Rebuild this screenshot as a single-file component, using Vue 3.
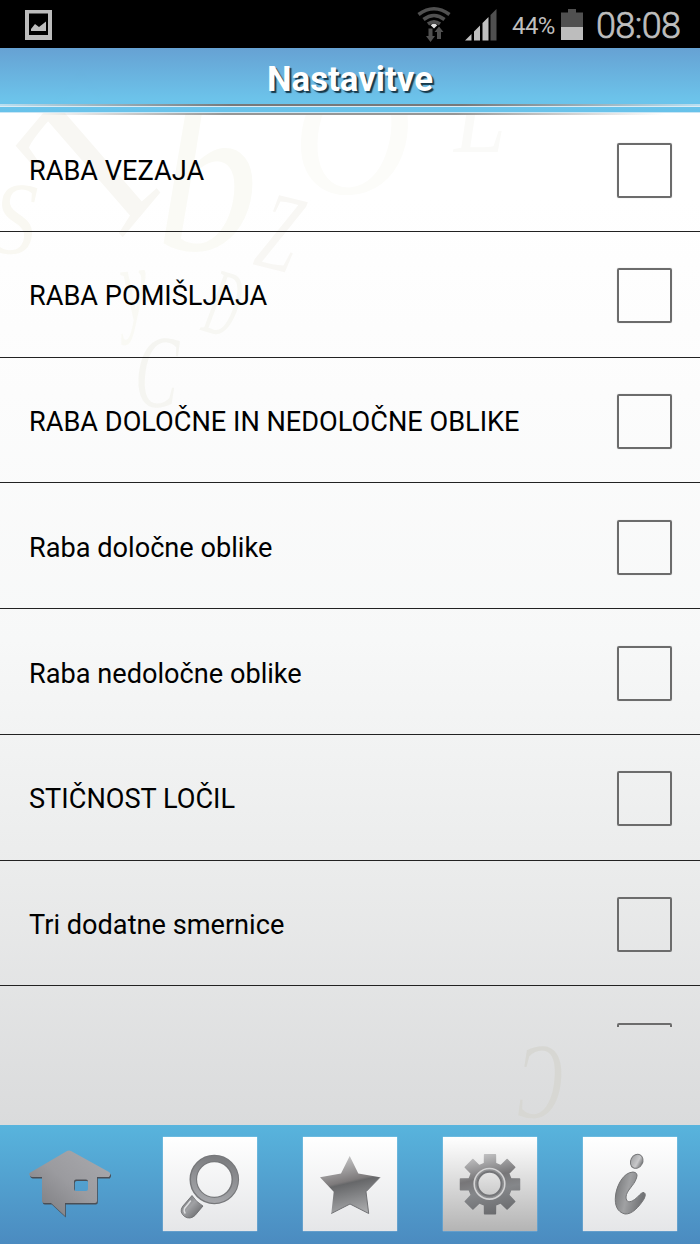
<template>
  <div class="screen">
    <!-- Status bar -->
    <div class="status">
      <svg class="picture-icon" width="27" height="30" viewBox="0 0 27 30">
        <path d="M0 0H27V30H0ZM4 3.5V25H23V3.5Z" fill="#bdbdbd" fill-rule="evenodd" />
        <path d="M6 21V19L10 14L14 17L21 11.5V21Z" fill="#bdbdbd" />
      </svg>
      <div class="status-right">
        <svg class="wifi-icon" width="34" height="36" viewBox="0 0 34 36" fill="none">
          <g stroke="#505050" stroke-width="3.600">
            <path d="M1.500 8.500Q17 -3 32.500 8.500" />
            <path d="M6.500 13.500Q17 5.500 27.500 13.500" />
            <path d="M11 18Q17 13.500 23 18" />
          </g>
          <path d="M17 22.500L13.700 19.200Q17 16.500 20.300 19.200Z" fill="#e0e0e0" />
          <path d="M11.500 22.500H15.500V30H18L13.500 36L9 30H11.500Z" fill="#505050" />
          <path d="M20 33V26H17.500L22 20.500L26.500 26H24V33Z" fill="#505050" />
        </svg>
        <svg class="signal-icon" width="32" height="32" viewBox="0 0 32 32">
          <path d="M0 31.500L6.500 25V31.500Z M9 31.500V22.500L15 16.500V31.500Z M17.500 31.500V14L23.500 8V31.500Z" fill="#c0c0c0" />
          <path d="M25.500 31.500V6L31.500 0V31.500Z" fill="#505050" />
        </svg>
        <span class="percent">44%</span>
        <svg class="battery-icon" width="22" height="32" viewBox="0 0 22 32">
          <path d="M0 3.500H7V0H15V3.500H22V18H0Z" fill="#505050" />
          <path d="M0 18H22V31H0Z" fill="#bdbdbd" />
        </svg>
        <span class="clock">08:08</span>
      </div>
    </div>

    <main class="page">
      <!-- Faint letters behind the list -->
      <svg class="letters" width="700" height="1077" viewBox="0 48 700 1077" aria-hidden="true">
        <text
          v-for="(l, i) in letters"
          :key="i"
          :transform="`translate(${l.x} ${l.y}) rotate(${l.rotate}) scale(${l.stretch} 1)`"
          :font-size="l.size"
          :fill="l.color"
        >{{ l.char }}</text>
      </svg>

      <header class="header">
        <h1>Nastavitve</h1>
        <div class="rule"></div>
      </header>

      <ul class="list">
        <li v-for="(item, i) in items" :key="i" class="row">
          <span class="label">{{ item.label }}</span>
          <button
            class="checkbox"
            role="checkbox"
            :aria-checked="item.checked"
            @click="item.checked = !item.checked"
          >
            <svg v-if="item.checked" viewBox="0 0 54 54"><path d="M10 28L22 40L44 13" /></svg>
          </button>
        </li>
      </ul>
    </main>

    <!-- Bottom navigation -->
    <nav class="nav">
      <button
        v-for="tab in tabs"
        :key="tab"
        :class="['tab', tab, { active: tab === current }]"
        :aria-label="tab"
        @click="current = tab"
      >
        <svg v-if="tab === 'home'" width="94" height="94" viewBox="0 0 94 94">
          <defs>
            <linearGradient id="home-fill" x1="1" y1="0" x2="0" y2="1">
              <stop offset="0" stop-color="#aaaaae" />
              <stop offset=".5" stop-color="#9b9b9f" />
              <stop offset="1" stop-color="#77777b" />
            </linearGradient>
          </defs>
          <path :d="homePath" fill="#4a4e55" fill-rule="evenodd" transform="translate(.8 1.600)" />
          <path :d="homePath" fill="url(#home-fill)" fill-rule="evenodd" />
        </svg>

        <svg v-else-if="tab === 'search'" width="94" height="94" viewBox="0 0 94 94">
          <defs>
            <linearGradient id="ring-fill" x1="0.6" y1="0" x2="0.4" y2="1">
              <stop offset="0" stop-color="#7c7d80" />
              <stop offset="1" stop-color="#a4a5a9" />
            </linearGradient>
            <linearGradient id="handle-fill" x1="0" y1="0" x2="1" y2="1">
              <stop offset="0" stop-color="#67686b" />
              <stop offset=".45" stop-color="#a0a1a4" />
              <stop offset="1" stop-color="#57585b" />
            </linearGradient>
          </defs>
          <circle cx="51.300" cy="42.500" r="21" fill="none" stroke="#77787b" stroke-width="7.600" />
          <circle cx="51.500" cy="42.400" r="21" fill="none" stroke="url(#ring-fill)" stroke-width="5" />
          <path d="M29 58.500Q33 65 40 69L32 78.500Q27 83 21.500 79.500Q16 75 19.500 69.500Z" fill="url(#handle-fill)" stroke="#66676a" stroke-width=".8" />
          <path d="M27.500 64L21.500 71.500Q20.500 74 22 76" fill="none" stroke="#dedfe1" stroke-width="1.500" stroke-linecap="round" />
        </svg>

        <svg v-else-if="tab === 'favorites'" width="94" height="94" viewBox="0 0 94 94">
          <defs>
            <linearGradient id="star-fill" gradientUnits="userSpaceOnUse" x1="42" y1="18" x2="56" y2="78">
              <stop offset="0" stop-color="#c9c9ca" />
              <stop offset=".42" stop-color="#7d7a7b" />
              <stop offset=".46" stop-color="#666769" />
              <stop offset="1" stop-color="#aeafb1" />
            </linearGradient>
          </defs>
          <path d="M46.700 19L55.300 36.500L77 40.300L63 54.700L65.700 76.500L47 67L28.300 76.500L30.700 54.700L17 40.300L38 36.500Z" fill="url(#star-fill)" />
          <path d="M77 40.300L63 54.700L65.700 76.500L47 67L28.300 76.500" fill="none" stroke="#707174" stroke-width="1" />
        </svg>

        <svg v-else-if="tab === 'settings'" width="94" height="94" viewBox="0 0 94 94">
          <defs>
            <linearGradient id="gear-fill" gradientUnits="userSpaceOnUse" x1="42" y1="16" x2="56" y2="78">
              <stop offset="0" stop-color="#c4c4c5" />
              <stop offset=".38" stop-color="#777678" />
              <stop offset=".6" stop-color="#85878a" />
              <stop offset="1" stop-color="#68696c" />
            </linearGradient>
            <linearGradient id="hole-fill" x1="0" y1="0" x2="0" y2="1">
              <stop offset="0" stop-color="#e6e6e6" />
              <stop offset="1" stop-color="#cacaca" />
            </linearGradient>
          </defs>
          <path :d="gearPath" fill="url(#gear-fill)" stroke="url(#gear-fill)" stroke-width="1.500" stroke-linejoin="round" />
          <circle cx="46.500" cy="46.800" r="15.300" fill="#8f9092" stroke="#d4d4d5" stroke-width="1.600" />
          <circle cx="46.500" cy="46.800" r="12" fill="url(#hole-fill)" stroke="#747578" stroke-width="2" />
        </svg>

        <svg v-else width="94" height="94" viewBox="0 0 94 94">
          <defs>
            <linearGradient id="info-fill" x1="0" y1="0" x2="1" y2="0.3">
              <stop offset="0" stop-color="#707173" />
              <stop offset=".5" stop-color="#a0a1a3" />
              <stop offset="1" stop-color="#737477" />
            </linearGradient>
            <linearGradient id="info-dot" x1="0" y1="0" x2="1" y2="0">
              <stop offset="0" stop-color="#a4a5a7" />
              <stop offset=".6" stop-color="#c8c8ca" />
              <stop offset="1" stop-color="#78797b" />
            </linearGradient>
          </defs>
          <ellipse cx="53.700" cy="24.300" rx="6" ry="7.300" transform="rotate(28 53.700 24.300)" fill="url(#info-dot)" stroke="#77787a" />
          <path d="M50 35Q55.500 35.500 53.500 41C51 49 43.500 53 43 60C43 65.500 47 66 51.500 62.500C55.500 60 58 55 61 55.500Q63.500 57 61 62C56 70 49 77.500 42 77C34 75 31.500 68 32.500 59C33.500 49 40 35.500 50 35Z" fill="url(#info-fill)" stroke="#737476" />
        </svg>
      </button>
    </nav>
  </div>
</template>

<script setup>
import { ref } from 'vue'

const items = ref([
  { label: 'RABA VEZAJA', checked: false },
  { label: 'RABA POMIŠLJAJA', checked: false },
  { label: 'RABA DOLOČNE IN NEDOLOČNE OBLIKE', checked: false },
  { label: 'Raba določne oblike', checked: false },
  { label: 'Raba nedoločne oblike', checked: false },
  { label: 'STIČNOST LOČIL', checked: false },
  { label: 'Tri dodatne smernice', checked: false },
  { label: '', checked: false }
])

const tabs = ['home', 'search', 'favorites', 'settings', 'info']
const current = ref('settings')

const letters = [
  { char: 'S', x: -10, y: 252, size: 104, rotate: 4, stretch: 0.85, color: '#f9f8f2' },
  { char: 'T', x: 112, y: 250, size: 215, rotate: -50, stretch: 0.9, color: '#f8f7f3' },
  { char: 'b', x: 156, y: 250, size: 216, rotate: 0, stretch: 0.95, color: '#fafaf5' },
  { char: 'O', x: 296, y: 197, size: 180, rotate: -4, stretch: 0.93, color: '#fcfcf9' },
  { char: 'L', x: 454, y: 152, size: 110, rotate: 0, stretch: 0.85, color: '#fafaf8' },
  { char: 'Z', x: 252, y: 264, size: 112, rotate: 14, stretch: 0.62, color: '#f8f7f4' },
  { char: 'y', x: 124, y: 322, size: 108, rotate: -6, stretch: 0.55, color: '#f9f9f4' },
  { char: 'D', x: 200, y: 330, size: 96, rotate: 16, stretch: 0.45, color: '#f7f7f3' },
  { char: 'C', x: 134, y: 406, size: 104, rotate: 2, stretch: 0.62, color: '#f5f5f1' },
  { char: 'C', x: 566, y: 1048, size: 108, rotate: 182, stretch: 0.62, color: '#d7d7d3' }
]

const homePath =
  'M44 14Q46 13 48 14L86 35Q88.500 37 86 40H74V64Q74 66 72 66H42V79L28 66H21Q19 66 19 64V40H9Q5.500 39 6.500 36Z' +
  'M53 42.500Q51 42.500 51 44.500V52Q51 54 53 54H63Q65 54 65 52V44.500Q65 42.500 63 42.500Z'

// Eight teeth around the hub
function buildGear(cx, cy, inner, outer, teeth) {
  const points = []
  for (let i = 0; i < teeth; i++) {
    const a = (i * 2 * Math.PI) / teeth
    for (const [r, d] of [[inner, -0.26], [outer, -0.18], [outer, 0.18], [inner, 0.26]]) {
      points.push(`${(cx + r * Math.cos(a + d)).toFixed(1)} ${(cy + r * Math.sin(a + d)).toFixed(1)}`)
    }
  }
  return `M${points.join('L')}Z`
}

const gearPath = buildGear(47, 47.3, 21.5, 30, 8)
</script>

<style>
body {
  margin: 0;
}
</style>

<style scoped>
.screen {
  display: flex;
  flex-direction: column;
  width: 700px;
  height: 1244px;
  overflow: hidden;
  font-family: Roboto, sans-serif;
  color: #000;
}

button {
  border: none;
  padding: 0;
  background: none;
}

.status {
  display: flex;
  justify-content: space-between;
  height: 48px;
  padding: 0 18px 0 25px;
  background: #000;
  color: #bebebe;
}

.picture-icon {
  margin-top: 10px;
}

.status-right {
  display: flex;
}

.wifi-icon {
  margin-top: 6px;
  margin-right: 14px;
}

.signal-icon {
  margin-top: 9px;
  margin-right: 15px;
}

.percent {
  width: 49px;
  font-size: 24px;
  line-height: 53px;
  letter-spacing: -0.6px;
}

.battery-icon {
  margin-top: 9px;
  margin-right: 13px;
}

.clock {
  width: 86px;
  font-size: 36px;
  font-weight: 300;
  line-height: 53px;
  letter-spacing: -0.6px;
  white-space: nowrap;
  -webkit-text-stroke: 0.7px #bebebe;
}

.page {
  position: relative;
  flex: none;
  height: 1077px;
  background: linear-gradient(#fff 0, #fff 14%, #fcfcfc 32%, #f7f8f8 55%, #ebecec 76%, #dadbdc 100%);
}

.letters {
  position: absolute;
  inset: 0;
  font-family: 'Liberation Serif', serif;
  font-style: italic;
}

.header {
  position: relative;
  height: 68px;
  background: linear-gradient(#629fd2f8, #68c2eaf8 52px, #68c2ea 64px, transparent 64px);
}

h1 {
  margin: 0;
  height: 56px;
  font-size: 34.8px;
  line-height: 63px;
  text-align: center;
  color: #fff;
  text-shadow: 2px 2px 1px #17384a;
}

/* double line under the title, darker in the middle */
.rule {
  height: 12px;
  background:
    linear-gradient(90deg, #fff0 5%, #969696 32%, #969696 65%, #fff0 95%) 0 9px / 100% 2px no-repeat,
    linear-gradient(#c9e6f5, #c9e6f5) 0 8px / 100% 1px no-repeat,
    linear-gradient(#dcecf5, #dcecf5) 0 2px / 100% 1px no-repeat,
    linear-gradient(90deg, #b9dff1 0, #77797a 33%, #77797a 66%, #b9dff1 100%) 0 0 / 100% 2px no-repeat;
}

.list {
  position: relative;
  height: 921px;
  margin: -10px 0 0;
  padding: 0;
  overflow: hidden;
  list-style: none;
}

.row {
  display: flex;
  align-items: center;
  justify-content: space-between;
  box-sizing: border-box;
  height: 125.75px;
  padding: 3.4px 28px 0 29px;
  border-bottom: 1px solid #222;
}

.label {
  padding-top: 1px;
  font-size: 27.17px;
}

.checkbox {
  box-sizing: border-box;
  width: 55px;
  height: 55px;
  border: 2px solid #6c6c6c;
  border-radius: 2px;
  box-shadow: 0 0 2px #fff, 0 0 1px #999;
}

.checkbox path {
  fill: none;
  stroke: #4a93c9;
  stroke-width: 6;
}

.nav {
  display: grid;
  grid-template-columns: repeat(5, 140px);
  justify-items: center;
  align-items: start;
  flex: 1;
  padding-top: 12px;
  background: linear-gradient(#58b4dd, #4b8bc0);
}

.tab {
  width: 94px;
  height: 94px;
  background: linear-gradient(#fff, #e5e6e8);
  box-shadow: 0 0 1px #d2edfa;
}

.tab svg {
  display: block;
}

.tab.home {
  background: none;
  box-shadow: none;
}

.tab.active {
  background: linear-gradient(#fff, #b4b4b4);
}
</style>
